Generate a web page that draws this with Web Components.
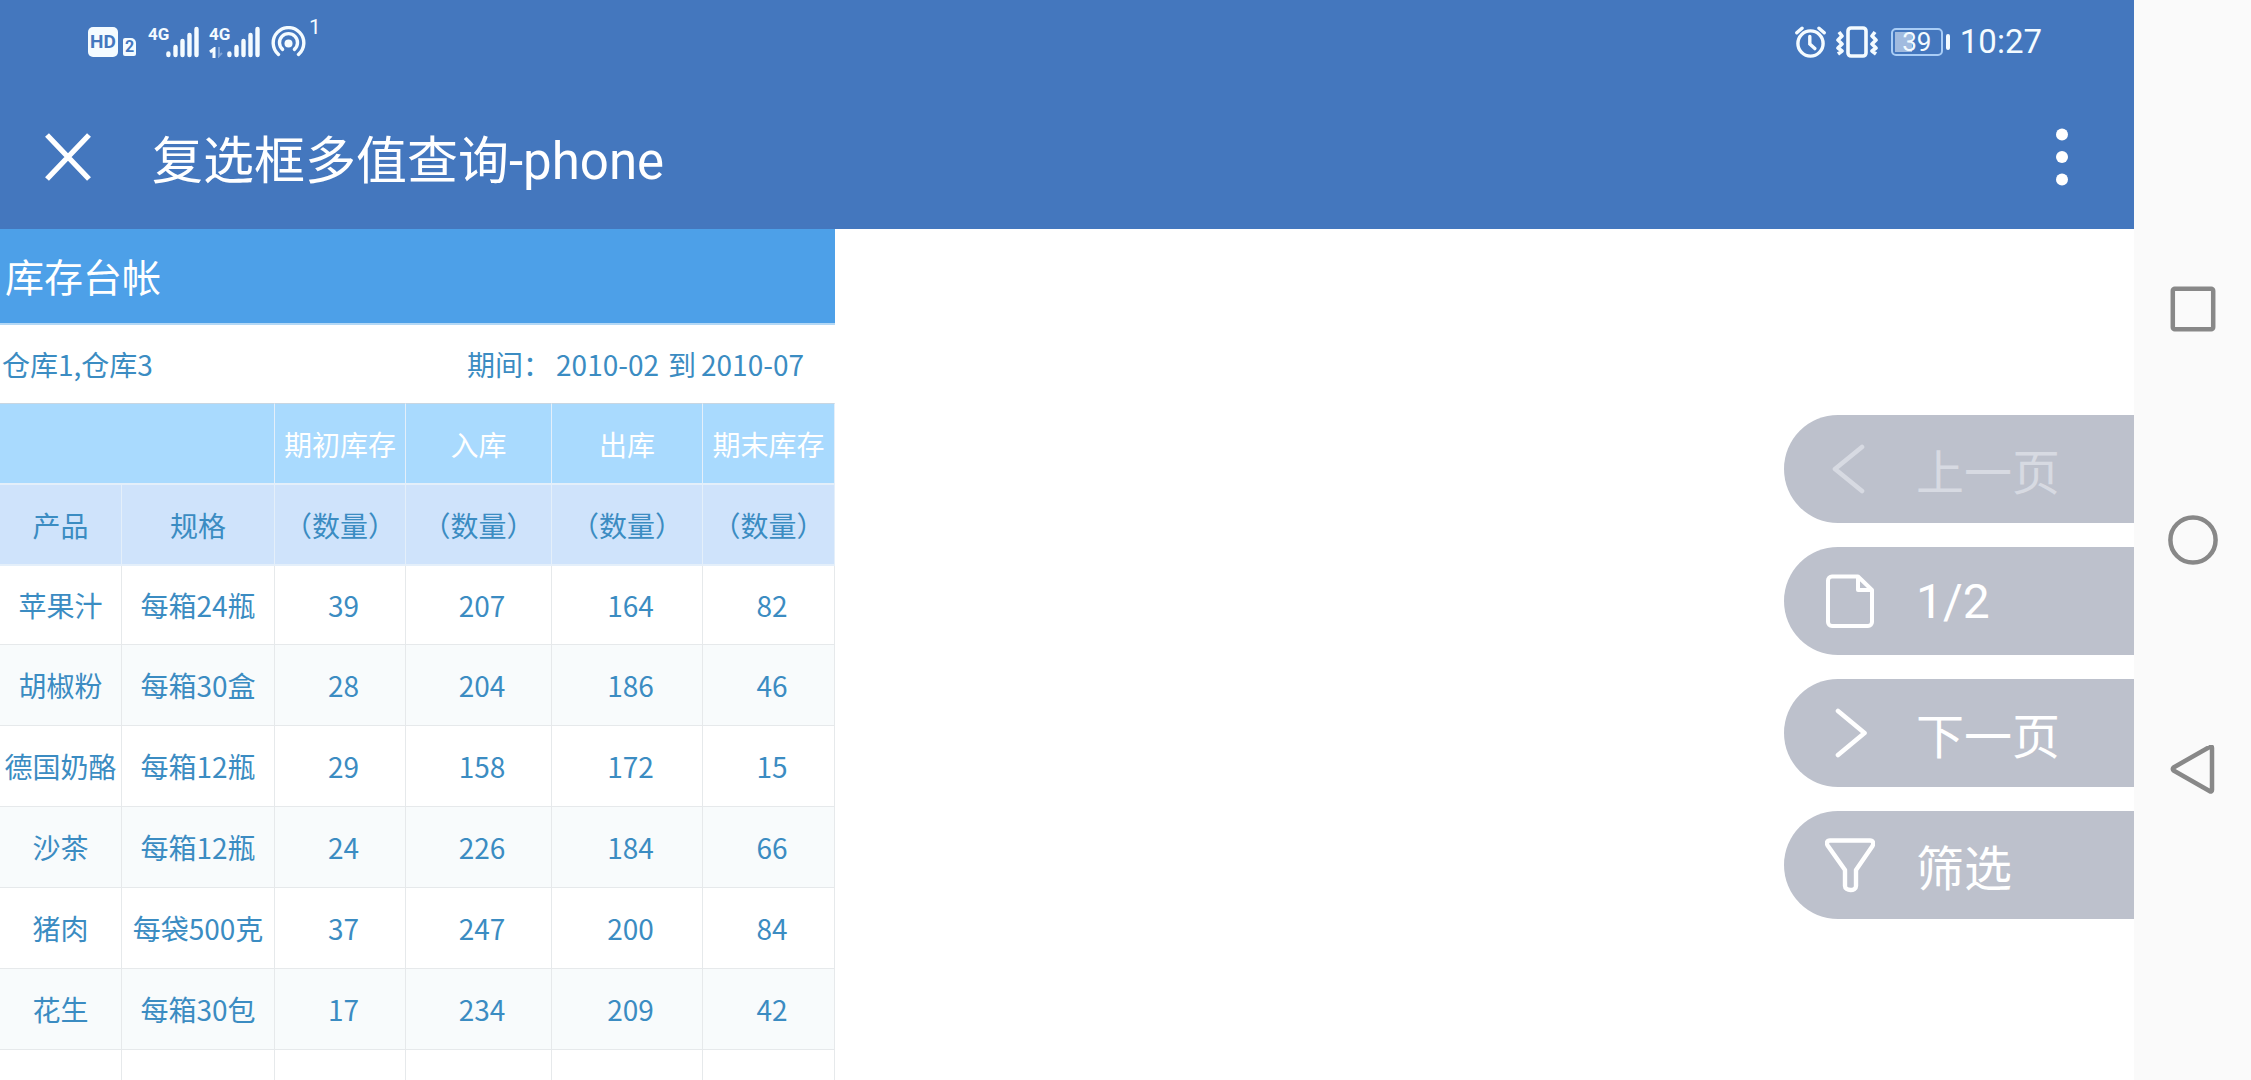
<!DOCTYPE html>
<html lang="zh-CN">
<head>
<meta charset="utf-8">
<title>复选框多值查询-phone</title>
<style>
  html, body { margin: 0; height: 100%; overflow: hidden; background: #fff; }
  body { font-family: Roboto, "Noto Sans CJK SC", sans-serif; }
</style>
</head>
<body>
<phone-screen>
  <status-bar slot="status"></status-bar>
  <app-bar slot="bar">复选框多值查询-phone</app-bar>
  <stock-report slot="report"></stock-report>
  <page-tools slot="tools">
    <tool-button icon="prev" disabled>上一页</tool-button>
    <tool-button icon="page">1/2</tool-button>
    <tool-button icon="next">下一页</tool-button>
    <tool-button icon="filter">筛选</tool-button>
  </page-tools>
  <system-nav slot="nav"></system-nav>
</phone-screen>

<script>
function shadow(el, html) {
  el.attachShadow({ mode: 'open' }).innerHTML = html;
}

class PhoneScreen extends HTMLElement {
  connectedCallback() {
    shadow(this, `
      <style>
        :host { display: flex; height: 100vh; overflow: hidden; }
        .app { flex: 1; min-width: 0; display: flex; flex-direction: column; }
        main { flex: 1; min-height: 0; display: flex; justify-content: space-between; align-items: flex-start; overflow: hidden; }
      </style>
      <div class="app">
        <slot name="status"></slot>
        <slot name="bar"></slot>
        <main><slot name="report"></slot><slot name="tools"></slot></main>
      </div>
      <slot name="nav"></slot>`);
  }
}

class SignalBars extends HTMLElement {
  connectedCallback() {
    const arrows = this.hasAttribute('data-active')
      ? '<svg width="14" height="11" viewBox="0 0 14 11"><path d="M1 5 5 2V11" fill="none" stroke="#f4fbff" stroke-width="3"/><path d="M10 0V9L13 6" fill="none" stroke="#7fa3d6" stroke-width="2"/></svg>' : '';
    shadow(this, `
      <style>
        :host { display: flex; height: 32px; color: #f4fbff; }
        .net { width: 18px; display: flex; flex-direction: column; justify-content: space-between; font: bold 17px/16px Roboto, sans-serif; }
        svg { display: block; }
      </style>
      <div class="net"><span>4G</span>${arrows}</div>
      <svg width="33" height="32" viewBox="0 0 33 32" stroke="#f4fbff" stroke-width="4.4" stroke-linecap="round">
        <path d="M2.400 27.500v1.500M9.500 21v8M16.500 15v14M23.500 9v20M30.500 3v26"/>
      </svg>`);
  }
}

class StatusBar extends HTMLElement {
  connectedCallback() {
    shadow(this, `
      <style>
        :host { display: flex; justify-content: space-between; align-items: center; height: 84px; padding: 0 92px 0 88px; box-sizing: border-box; background: #4477be; color: #f4fbff; }
        .side { display: flex; align-items: center; height: 32px; }
        .hd { width: 30px; height: 30px; border-radius: 5px; background: #f4fbff; color: #4477be; font: bold 19px/30px Roboto, sans-serif; text-align: center; }
        .sim { align-self: flex-end; margin: 0 12px 2px 5px; width: 13px; height: 18px; border-radius: 2px 5px 2px 2px; background: #f4fbff; color: #4477be; font: bold 16px/18px Roboto, sans-serif; text-align: center; }
        signal-bars + signal-bars { margin: 0 11px 0 10px; }
        .count { align-self: flex-start; margin: -9px 0 0 3px; font-size: 21px; line-height: 20px; }
        svg { display: block; }
        .vib { margin: 0 13px 0 10px; }
        .battery { box-sizing: border-box; width: 52px; height: 28px; border: 2px solid #a9cdf6; border-radius: 5px; padding: 2px 0; font-size: 26px; line-height: 20px; text-align: center;
          background: linear-gradient(#a1bbdf, #a1bbdf) 2px 2px / 17px 20px no-repeat; }
        .nub { width: 4px; height: 16px; border-radius: 2px; background: #f4fbff; margin: 0 10px 0 3px; }
        time { font-size: 33px; line-height: 32px; }
      </style>
      <div class="side">
        <span class="hd">HD</span><span class="sim">2</span>
        <signal-bars></signal-bars><signal-bars data-active></signal-bars>
        <svg width="35" height="32" viewBox="0 0 35 32" fill="none" stroke="#f4fbff" stroke-width="3.4" stroke-linecap="round">
          <path d="M7.500 28.500A15.300 15.300 0 1 1 27.500 28.500"/><path d="M11.600 23.400A9 9 0 1 1 23.400 23.400"/>
          <circle cx="17.500" cy="17.500" r="4" fill="#f4fbff" stroke="none"/>
        </svg>
        <span class="count">1</span>
      </div>
      <div class="side">
        <svg width="31" height="32" viewBox="0 0 31 32" fill="none" stroke="#f4fbff" stroke-width="3.400" stroke-linecap="round">
          <circle cx="15.500" cy="17.500" r="12.600"/><path d="M14.800 10.500V18l5 4.600M1.800 6.800 7 2.200M29.200 6.800 24 2.200"/>
        </svg>
        <svg class="vib" width="42" height="32" viewBox="0 0 42 32" fill="none" stroke="#f4fbff" stroke-width="3.600" stroke-linejoin="round">
          <rect x="12" y="2" width="18" height="28" rx="3"/>
          <path d="M3 6l3 4-4 4 4 4-4 4 4 3-4 3M39 6l-3 4 4 4-4 4 4 4-4 3 4 3" stroke-width="3.600"/>
        </svg>
        <span class="battery">39</span><span class="nub"></span>
        <time>10:27</time>
      </div>`);
  }
}

class AppBar extends HTMLElement {
  connectedCallback() {
    shadow(this, `
      <style>
        :host { display: flex; align-items: center; height: 145px; padding: 0 44px; box-sizing: border-box; background: #4477be; color: #fff; }
        button { border: 0; padding: 0; background: none; color: inherit; }
        svg { display: block; }
        h1 { flex: 1; margin: 0 0 0 60px; font-size: 51px; line-height: normal; font-weight: 400; }
        .more { padding: 0 22px; }
      </style>
      <button aria-label="关闭"><svg width="48" height="48" viewBox="0 0 48 48" stroke="currentColor" stroke-width="5.400"><path d="M3 2 45 46M45 2 3 46"/></svg></button>
      <h1><slot></slot></h1>
      <button class="more" aria-label="更多"><svg width="12" height="58" viewBox="0 0 12 58" fill="currentColor"><circle cx="6" cy="6.500" r="6"/><circle cx="6" cy="29" r="6"/><circle cx="6" cy="51.500" r="6"/></svg></button>`);
  }
}

class StockReport extends HTMLElement {
  connectedCallback() {
    const rows = [
      ['苹果汁', '每箱24瓶', 39, 207, 164, 82],
      ['胡椒粉', '每箱30盒', 28, 204, 186, 46],
      ['德国奶酪', '每箱12瓶', 29, 158, 172, 15],
      ['沙茶', '每箱12瓶', 24, 226, 184, 66],
      ['猪肉', '每袋500克', 37, 247, 200, 84],
      ['花生', '每箱30包', 17, 234, 209, 42]
    ];
    const cell = c => typeof c === 'number' ? `<td class="num">${c}</td>` : `<td>${c}</td>`;
    const body = rows.map(r => '<tr>' + r.map(cell).join('') + '</tr>').join('');
    shadow(this, `
      <style>
        :host { display: block; width: 835px; font: 28px/40px "Noto Sans CJK SC", sans-serif; color: #3b8cc2; }
        h2 { margin: 0; padding: 0 5px; height: 94px; line-height: 92px; font-size: 39px; font-weight: 400; background: #4da0e8; color: #fff; border-bottom: 2px solid #b4d8f5; }
        .meta { display: flex; justify-content: space-between; align-items: center; height: 78px; padding: 0 31px 0 2px; }
        .period { display: flex; gap: 5px; }
        .to { margin-left: 4px; }
        table { width: 100%; table-layout: fixed; border-collapse: separate; border-spacing: 0; }
        th, td { box-sizing: border-box; height: 81px; padding: 0; font-weight: 400; text-align: center; white-space: nowrap; border: solid #e6e9eb; border-width: 0 1px 1px 0; }
        th { border-color: #e4effa; border-bottom-width: 2px; }
        td.num { padding-left: 7px; }
        .groups th { height: 82px; background: #a9dafe; color: #fff; border-top: 1px solid #c8d6e2; }
        .fields th { background: #cfe3fb; }
        tbody tr:first-child td { height: 79px; }
        tbody tr:nth-child(even) td { background: #f8fbfc; }
      </style>
      <h2>库存台帐</h2>
      <div class="meta">
        <span>仓库1,仓库3</span>
        <div class="period"><span>期间：</span><span>2010-02</span><span class="to">到</span><span>2010-07</span></div>
      </div>
      <table>
        <colgroup><col style="width:122px"><col style="width:153px"><col style="width:131px"><col style="width:146px"><col style="width:151px"><col></colgroup>
        <thead>
          <tr class="groups"><th colspan="2"></th><th>期初库存</th><th>入库</th><th>出库</th><th>期末库存</th></tr>
          <tr class="fields"><th>产品</th><th>规格</th><th>（数量）</th><th>（数量）</th><th>（数量）</th><th>（数量）</th></tr>
        </thead>
        <tbody>${body}<tr><td></td><td></td><td></td><td></td><td></td><td></td></tr></tbody>
      </table>`);
  }
}

class PageTools extends HTMLElement {
  connectedCallback() {
    shadow(this, `
      <style>:host { display: flex; flex-direction: column; gap: 24px; width: 350px; padding-top: 186px; }</style>
      <slot></slot>`);
  }
}

const toolIcons = {
  prev: '<path d="M37 3 10 25 37 47" stroke-width="4.600"/>',
  next: '<path d="M13 3 39.500 25 13 47" stroke-width="4.600"/>',
  page: '<path d="M33 2.500H7a4 4 0 0 0-4 4V48a4 4 0 0 0 4 4H43a4 4 0 0 0 4-4V16L33 2.500V16H46" stroke-width="4"/>',
  filter: '<path d="M5 2.500H45C48 2.500 49 5 47.500 8L31 32V48C31 53.500 20 53 20 48V32L3 8C1 5 2 2.500 5 2.500Z" stroke-width="4.400"/>'
};

class ToolButton extends HTMLElement {
  connectedCallback() {
    const name = this.getAttribute('icon');
    const height = name === 'page' || name === 'filter' ? 55 : 50;
    shadow(this, `
      <style>
        :host { display: block; }
        button { display: flex; align-items: center; gap: 41px; width: 100%; height: 108px; padding: 0 0 0 41px; border: 0; border-radius: 54px 0 0 54px; background: #bdc1cc; color: #fff; font: inherit; font-size: 48px; line-height: normal; text-align: left; }
        button:disabled { color: #d7dae2; }
        svg { display: block; }
      </style>
      <button ${this.hasAttribute('disabled') ? 'disabled' : ''}>
        <svg width="50" height="${height}" viewBox="0 0 50 ${height}" fill="none" stroke="currentColor" stroke-linecap="round" stroke-linejoin="round">${toolIcons[name]}</svg>
        <span><slot></slot></span>
      </button>`);
  }
}

class SystemNav extends HTMLElement {
  connectedCallback() {
    shadow(this, `
      <style>
        :host { display: flex; flex-direction: column; justify-content: center; width: 117px; background: #fafafa; }
        button { display: flex; align-items: center; justify-content: center; height: 230px; border: 0; padding: 0; background: none; }
        svg { fill: none; stroke: #888; stroke-width: 4.500; stroke-linejoin: round; }
      </style>
      <button aria-label="最近任务"><svg width="50" height="50"><rect x="4.800" y="3.800" width="40.400" height="40.400" rx="2"/></svg></button>
      <button aria-label="主屏幕"><svg width="50" height="50"><circle cx="25" cy="25" r="22.600"/></svg></button>
      <button aria-label="返回"><svg width="50" height="50"><path d="M44 3Q44 .5 41.500 2L6 22.200Q3.500 24 6 25.800L41.500 46Q44 47.500 44 45Z"/></svg></button>`);
  }
}

customElements.define('phone-screen', PhoneScreen);
customElements.define('signal-bars', SignalBars);
customElements.define('status-bar', StatusBar);
customElements.define('app-bar', AppBar);
customElements.define('stock-report', StockReport);
customElements.define('page-tools', PageTools);
customElements.define('tool-button', ToolButton);
customElements.define('system-nav', SystemNav);
</script>
</body>
</html>
